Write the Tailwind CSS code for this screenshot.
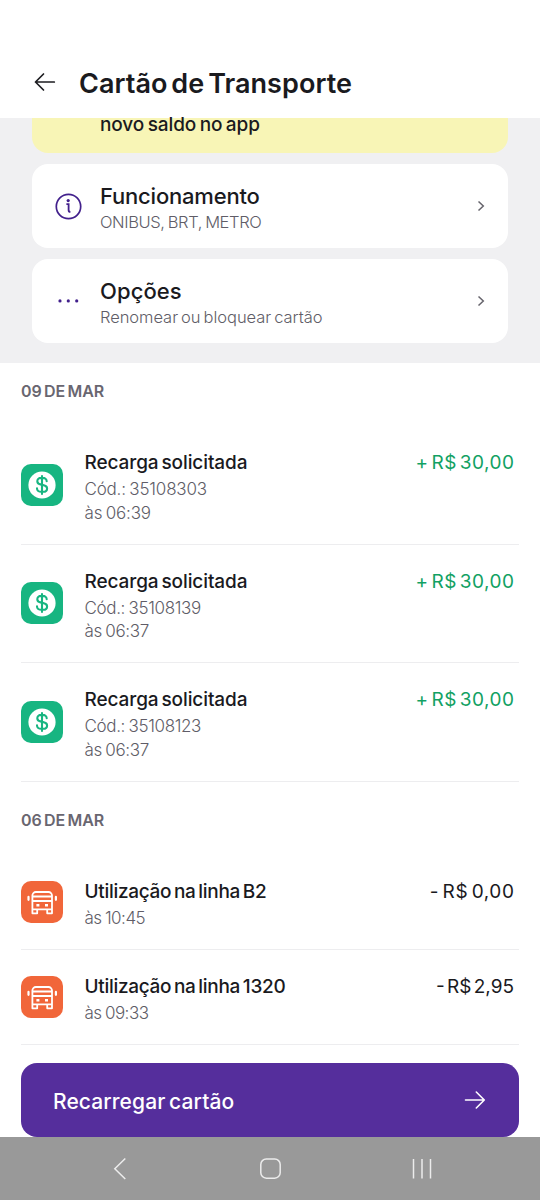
<!DOCTYPE html>
<html lang="pt-BR">
<head>
<meta charset="utf-8">
<meta name="viewport" content="width=device-width, initial-scale=1">
<title>Cartão de Transporte</title>
<script src="https://cdn.jsdelivr.net/npm/@tailwindcss/browser@4"></script>
</head>
<body class="bg-white">
<svg class="hidden">
  <symbol id="coin" viewBox="0 0 42 42">
    <circle cx="21" cy="21" r="13.6" fill="#fff"/>
    <path d="M25.700 17.200c0-2-1.800-3.300-4-3.300h-1.600c-2.200 0-3.800 1.300-3.800 3.300 0 2.100 1.500 3 3.900 3.400l1.900.4c2.500.5 4 1.400 4 3.400s-1.700 3.400-4 3.400h-1.900c-2.400 0-4.200-1.300-4.200-3.400M21 12v18" fill="none" stroke="#17b581" stroke-width="2.100" stroke-linecap="round"/>
  </symbol>
  <symbol id="bus" viewBox="0 0 42 42">
    <g fill="none" stroke="#fff" stroke-width="1.800" stroke-linejoin="round" stroke-linecap="round">
      <path d="M11.400 28.300V14.500a3.500 3.500 0 0 1 3.500-3.500h12.600a3.500 3.500 0 0 1 3.500 3.500v13.800zM11.400 15.500H31M11.400 20H31M11.400 28v4.300h4.800V28.300M26.200 28.300v4H31V28"/>
      <path d="M7.500 15.900v2.900M34.900 15.900v2.900" stroke-width="2.200"/>
    </g>
    <path d="M15.400 22.900h3v2.700h-3zM24 22.900h3v2.700h-3z" fill="#fff"/>
  </symbol>
  <symbol id="chev" viewBox="0 0 8 12"><path d="M1.500 1.500 6.300 6 1.500 10.500" fill="none" stroke="#66646c" stroke-width="1.500"/></symbol>
</svg>
<div class="flex h-[1200px] w-[540px] flex-col overflow-hidden font-['Inter','Noto_Sans',sans-serif] text-[#1a1a1e] whitespace-nowrap">
  <header class="flex h-[118px] shrink-0 items-center pt-[46px] pl-[34px]">
    <svg class="h-5 w-[22px]" viewBox="0 0 22 20" fill="none" stroke="#1d1d21" stroke-width="1.700" stroke-linecap="round" stroke-linejoin="round"><path d="M20.300 10H1.500M9.500 2 1.500 10l8 8"/></svg>
    <h1 class="ml-[23px] pt-[3px] text-[27px] leading-8 font-semibold tracking-[0.05px] [word-spacing:-3px]">Cartão de Transporte</h1>
  </header>

  <section class="flex h-[245px] shrink-0 flex-col gap-[11px] bg-[#f0f0f2] px-8">
    <div class="h-[35px] shrink-0 rounded-b-[16px] bg-[#f8f5b6] pl-[68px] text-[19px] leading-[14px] font-medium tracking-[-0.1px] [word-spacing:-1.500px]">novo saldo no app</div>
    <div class="flex h-[84px] shrink-0 items-center rounded-[16px] bg-white pr-[23px] pl-[23px]">
      <svg class="h-[27px] w-[27px]" viewBox="0 0 27 27" fill="none" stroke="#42208c" stroke-width="1.700"><circle cx="13.500" cy="13.500" r="12.200"/><path d="M11.400 11.200h2.200v5.700q0 2 1.800 2" stroke-width="1.800"/><circle cx="13.200" cy="7.600" r="1.600" fill="#42208c" stroke="none"/></svg>
      <div class="ml-[18px] grow pt-[5px]">
        <div class="text-[22px] leading-[27px] font-medium tracking-[-0.2px]">Funcionamento</div>
        <div class="text-[16.500px] leading-6 font-light tracking-[-0.400px] [word-spacing:-1px] text-[#605d67]">ONIBUS, BRT, METRO</div>
      </div>
      <svg class="h-3 w-2"><use href="#chev"/></svg>
    </div>
    <div class="flex h-[84px] shrink-0 items-center rounded-[16px] bg-white pr-[23px] pl-[23px]">
      <svg class="h-[27px] w-[27px]" viewBox="0 0 27 27" fill="#42208c"><circle cx="5" cy="12.900" r="1.600"/><circle cx="13.300" cy="12.900" r="1.600"/><circle cx="21.700" cy="12.900" r="1.600"/></svg>
      <div class="ml-[18px] grow pt-[5px]">
        <div class="text-[22px] leading-[27px] font-medium tracking-[0.1px]">Opções</div>
        <div class="text-[16.500px] leading-6 font-light tracking-[-0.050px] [word-spacing:-1.500px] text-[#605d67]">Renomear ou bloquear cartão</div>
      </div>
      <svg class="h-3 w-2"><use href="#chev"/></svg>
    </div>
  </section>

  <main class="flex h-[700px] shrink-0 flex-col px-[21px]">
    <h2 class="h-[63px] shrink-0 pt-[16px] text-[16px] leading-6 font-semibold tracking-[-0.1px] [word-spacing:-1.500px] text-[#696670]">09 DE MAR</h2>

    <div class="flex h-[118.5px] shrink-0 border-b border-[#ededef]">
      <svg class="h-[42px] w-[42px] self-center rounded-[10px] bg-[#17b581]"><use href="#coin"/></svg>
      <div class="ml-[21.500px] grow pt-[23px]">
        <div class="text-[19px] leading-7 font-medium tracking-[-0.1px] [word-spacing:-2px]">Recarga solicitada</div>
        <div class="mt-px text-[17px] leading-[23.500px] font-light tracking-[-0.2px] [word-spacing:-1px] text-[#605d67]">Cód.: 35108303<br>às 06:39</div>
      </div>
      <div class="pt-[23px] pr-[4.500px] text-[19px] leading-7 tracking-[0.5px] [word-spacing:-3px] text-[#12a163]">+ R$ 30,00</div>
    </div>
    <div class="flex h-[118.5px] shrink-0 border-b border-[#ededef]">
      <svg class="h-[42px] w-[42px] self-center rounded-[10px] bg-[#17b581]"><use href="#coin"/></svg>
      <div class="ml-[21.500px] grow pt-[23px]">
        <div class="text-[19px] leading-7 font-medium tracking-[-0.1px] [word-spacing:-2px]">Recarga solicitada</div>
        <div class="mt-px text-[17px] leading-[23.500px] font-light tracking-[-0.350px] [word-spacing:-1px] text-[#605d67]">Cód.: 35108139<br>às 06:37</div>
      </div>
      <div class="pt-[23px] pr-[4.500px] text-[19px] leading-7 tracking-[0.5px] [word-spacing:-3px] text-[#12a163]">+ R$ 30,00</div>
    </div>
    <div class="flex h-[118.5px] shrink-0 border-b border-[#ededef]">
      <svg class="h-[42px] w-[42px] self-center rounded-[10px] bg-[#17b581]"><use href="#coin"/></svg>
      <div class="ml-[21.500px] grow pt-[23px]">
        <div class="text-[19px] leading-7 font-medium tracking-[-0.1px] [word-spacing:-2px]">Recarga solicitada</div>
        <div class="mt-px text-[17px] leading-[23.500px] font-light tracking-[-0.350px] [word-spacing:-1px] text-[#605d67]">Cód.: 35108123<br>às 06:37</div>
      </div>
      <div class="pt-[23px] pr-[4.500px] text-[19px] leading-7 tracking-[0.5px] [word-spacing:-3px] text-[#12a163]">+ R$ 30,00</div>
    </div>

    <h2 class="h-[73px] shrink-0 pt-[26px] text-[16px] leading-6 font-semibold tracking-[-0.1px] [word-spacing:-1.500px] text-[#696670]">06 DE MAR</h2>

    <div class="flex h-[95px] shrink-0 border-b border-[#ededef]">
      <svg class="h-[42px] w-[42px] self-center rounded-[10px] bg-[#f1663a]"><use href="#bus"/></svg>
      <div class="ml-[21.500px] grow pt-[23px]">
        <div class="text-[19px] leading-7 font-medium tracking-[-0.3px] [word-spacing:-2px]">Utilização na linha B2</div>
        <div class="mt-px text-[17px] leading-[23.500px] font-light tracking-[-0.500px] [word-spacing:-1px] text-[#605d67]">às 10:45</div>
      </div>
      <div class="pt-[23px] pr-[4.500px] text-[19px] leading-7 tracking-[0.6px] [word-spacing:-2.500px]">- R$ 0,00</div>
    </div>
    <div class="flex h-[95.5px] shrink-0 border-b border-[#ededef]">
      <svg class="h-[42px] w-[42px] self-center rounded-[10px] bg-[#f1663a]"><use href="#bus"/></svg>
      <div class="ml-[21.500px] grow pt-[23px]">
        <div class="text-[19px] leading-7 font-medium tracking-[-0.3px] [word-spacing:-2px]">Utilização na linha 1320</div>
        <div class="mt-px text-[17px] leading-[23.500px] font-light tracking-[-0.500px] [word-spacing:-1px] text-[#605d67]">às 09:33</div>
      </div>
      <div class="pt-[23px] pr-[5px] text-[19px] leading-7 [word-spacing:-3px]">- R$ 2,95</div>
    </div>
  </main>

  <div class="h-[74px] shrink-0 px-[21px]">
    <button class="flex h-[74px] w-full items-center justify-between rounded-[16px] bg-[#552e9c] pr-[33px] pl-8 text-white">
      <span class="pt-[3px] text-[21px] font-medium tracking-[0.1px] [word-spacing:-2px]">Recarregar cartão</span>
      <svg class="h-5 w-[22px]" viewBox="0 0 22 20" fill="none" stroke="#fff" stroke-width="1.600" stroke-linecap="round" stroke-linejoin="round"><path d="M1.500 10h18.800M12.300 2l8 8-8 8"/></svg>
    </button>
  </div>

  <nav class="flex h-[63px] shrink-0 items-center bg-[#999999]">
    <svg class="h-[63px] w-[540px]" viewBox="0 0 540 63" fill="none" stroke="#ececec" stroke-width="1.500"><path d="M125.300 21.500 114.800 31.700l10.500 10.300"/><rect x="260.800" y="22" width="19.400" height="19.200" rx="5.500"/><path d="M413.500 22v19.500M422 22v19.500M430.500 22v19.500"/></svg>
  </nav>
</div>
</body>
</html>
